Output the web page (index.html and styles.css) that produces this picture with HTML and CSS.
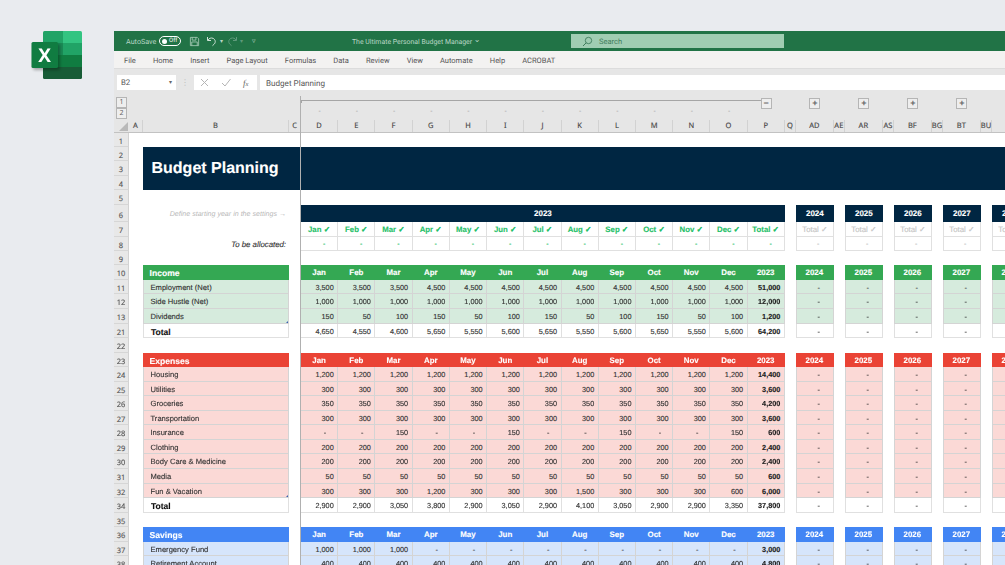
FILE: index.html
```html
<!DOCTYPE html>
<html lang="en">
<head>
<meta charset="utf-8">
<title>Budget Planning</title>
<link rel="stylesheet" href="styles.css">
</head>
<body>
<div class="logo">
<svg width="52" height="48" viewBox="0 0 52 48">
<defs><filter id="sh" x="-30%" y="-30%" width="160%" height="160%"><feGaussianBlur stdDeviation="1.6"/></filter></defs>
<path d="M12 1.500A1.500 1.500 0 0 1 13.500 0H32V12H12z" fill="#21a366"/>
<path d="M32 0h17.500A1.500 1.500 0 0 1 51 1.500V12H32z" fill="#33c481"/>
<rect x="12" y="12" width="20" height="12" fill="#1a8a55"/>
<rect x="32" y="12" width="19" height="12" fill="#21a366"/>
<rect x="12" y="24" width="20" height="12" fill="#107c41"/>
<rect x="32" y="24" width="19" height="12" fill="#107c41"/>
<path d="M12 36h39v10.500a1.500 1.500 0 0 1-1.500 1.500h-36a1.500 1.500 0 0 1-1.500-1.500z" fill="#185c37"/>
<rect x="2" y="13" width="27" height="26" rx="2" fill="#000" opacity=".3" filter="url(#sh)"/>
<rect x="0.500" y="11" width="26.500" height="26" rx="1.500" fill="#107c41"/>
<text class="logo-x" x="13.500" y="31">X</text>
</svg>
</div>
<div class="window">
  <div class="titlebar">
    <div class="tb-left">
      <span class="autosave">AutoSave</span>
      <span class="toggle"><span class="knob"></span>Off</span>
      <svg class="ic" width="11" height="11" viewBox="0 0 12 12"><path d="M1.500 1.500h7.500l1.500 1.500v7.500h-9z M3.500 1.500v3h4v-3 M3 10.500v-4h6v4" fill="none" stroke="#a9cdb8" stroke-width=".9"/></svg>
      <svg class="ic undo" width="12" height="12" viewBox="0 0 12 12"><path d="M1.500 2v3.500H5 M1.800 5.200C3 3.300 5 2.500 7 3.300c2.300 1 3 3.800 1.300 5.700L6.500 10.700" fill="none" stroke="#cfe3d7" stroke-width="1"/></svg>
      <span class="caret">▾</span>
      <svg class="ic redo" width="12" height="12" viewBox="0 0 12 12"><path d="M10.500 2v3.500H7 M10.200 5.200C9 3.300 7 2.500 5 3.300c-2.300 1-3 3.800-1.300 5.700l1.800 1.700" fill="none" stroke="#5f9a7b" stroke-width="1"/></svg>
      <span class="caret dim">▾</span>
      <span class="custom">▿</span>
    </div>
    <div class="doc">The Ultimate Personal Budget Manager <span class="chev">⌄</span></div>
    <div class="search">
      <svg width="11" height="11" viewBox="0 0 11 11"><circle cx="6.500" cy="4.500" r="3.200" fill="none" stroke="#3f7d5c" stroke-width=".9"/><path d="M4.200 6.800L1 10" stroke="#3f7d5c" stroke-width="1"/></svg>
      <span>Search</span>
    </div>
  </div>
  <div class="menu">
    <span>File</span><span>Home</span><span>Insert</span><span>Page Layout</span><span>Formulas</span><span>Data</span><span>Review</span><span>View</span><span>Automate</span><span>Help</span><span>ACROBAT</span>
  </div>
  <div class="fbar">
    <div class="namebox">B2<span class="nb-caret">▾</span></div>
    <span class="grip">⋮</span>
    <div class="fbtns">
      <svg width="9" height="9" viewBox="0 0 9 9"><path d="M1 1l7 7M8 1L1 8" stroke="#b5b5b5" stroke-width="1"/></svg>
      <svg width="10" height="9" viewBox="0 0 10 9"><path d="M1 5l3 3 5.500-7" fill="none" stroke="#b5b5b5" stroke-width="1"/></svg>
      <span class="fx">f<small>x</small></span>
    </div>
    <div class="finput">Budget Planning</div>
  </div>
  <div class="sheet">
    <div class="freeze"></div>
    <div class="row outline">
      <div class="lvl"><span>1</span><span>2</span></div><i></i><i></i><i></i>
      <div class="oline"></div>
      <em>-</em><em>-</em><em>-</em><em>-</em><em>-</em><em>-</em><em>-</em><em>-</em><em>-</em><em>-</em><em>-</em><em>-</em>
      <strong>−</strong><i></i><strong>+</strong><i></i><strong>+</strong><i></i><strong>+</strong><i></i><strong>+</strong><i></i><strong>+</strong>
    </div>
    <div class="row cols">
      <b class="corner"><svg width="9" height="9" viewBox="0 0 9 9"><path d="M9 0v9H0z" fill="#b9b9b9"/></svg></b>
      <u>A</u><u>B</u><u>C</u><u>D</u><u>E</u><u>F</u><u>G</u><u>H</u><u>I</u><u>J</u><u>K</u><u>L</u><u>M</u><u>N</u><u>O</u><u>P</u><u>Q</u><u>AD</u><u>AE</u><u>AR</u><u>AS</u><u>BF</u><u>BG</u><u>BT</u><u>BU</u>
    </div>
    <div class="row r1"><b>1</b></div>
    <div class="row banner">
      <div class="rhs"><b>2</b><b>3</b><b>4</b></div><i></i>
      <div class="bn">Budget Planning</div>
    </div>
    <div class="row r5"><b>5</b></div>
    <div class="row r6 yr">
      <b>6</b><i></i><div class="note">Define starting year in the settings →</div><i></i>
      <span class="y23">2023</span>
      <i></i><span>2024</span><i></i><span>2025</span><i></i><span>2026</span><i></i><span>2027</span><i></i><span>2028</span>
    </div>
    <div class="row chk">
      <b>7</b><i></i><i></i><i></i>
      <span>Jan ✓</span><span>Feb ✓</span><span>Mar ✓</span><span>Apr ✓</span><span>May ✓</span><span>Jun ✓</span><span>Jul ✓</span><span>Aug ✓</span><span>Sep ✓</span><span>Oct ✓</span><span>Nov ✓</span><span>Dec ✓</span><span>Total ✓</span>
      <i></i><span class="off">Total ✓</span><i></i><span class="off">Total ✓</span><i></i><span class="off">Total ✓</span><i></i><span class="off">Total ✓</span><i></i><span class="off">Total ✓</span>
    </div>
    <div class="row alloc">
      <b>8</b><i></i><div class="tba">To be allocated:</div><i></i>
      <span>-</span><span>-</span><span>-</span><span>-</span><span>-</span><span>-</span><span>-</span><span>-</span><span>-</span><span>-</span><span>-</span><span>-</span><span>-</span>
      <i></i><span class="off">-</span><i></i><span class="off">-</span><i></i><span class="off">-</span><i></i><span class="off">-</span><i></i><span class="off">-</span>
    </div>
    <div class="row r9"><b>9</b></div>

    <div class="row hd inc">
      <b>10</b><i></i><span class="l">Income</span><i></i>
      <span>Jan</span><span>Feb</span><span>Mar</span><span>Apr</span><span>May</span><span>Jun</span><span>Jul</span><span>Aug</span><span>Sep</span><span>Oct</span><span>Nov</span><span>Dec</span><span>2023</span>
      <i></i><span>2024</span><i></i><span>2025</span><i></i><span>2026</span><i></i><span>2027</span><i></i><span>2028</span>
    </div>
    <div class="row inc">
      <b>11</b><i></i><span class="l">Employment (Net)</span><i></i>
      <span>3,500</span><span>3,500</span><span>3,500</span><span>4,500</span><span>4,500</span><span>4,500</span><span>4,500</span><span>4,500</span><span>4,500</span><span>4,500</span><span>4,500</span><span>4,500</span><span class="t">51,000</span>
      <i></i><span class="y">-</span><i></i><span class="y">-</span><i></i><span class="y">-</span><i></i><span class="y">-</span><i></i><span class="y">-</span>
    </div>
    <div class="row inc">
      <b>12</b><i></i><span class="l">Side Hustle (Net)</span><i></i>
      <span>1,000</span><span>1,000</span><span>1,000</span><span>1,000</span><span>1,000</span><span>1,000</span><span>1,000</span><span>1,000</span><span>1,000</span><span>1,000</span><span>1,000</span><span>1,000</span><span class="t">12,000</span>
      <i></i><span class="y">-</span><i></i><span class="y">-</span><i></i><span class="y">-</span><i></i><span class="y">-</span><i></i><span class="y">-</span>
    </div>
    <div class="row inc">
      <b>13</b><i></i><span class="l mark">Dividends</span><i></i>
      <span>150</span><span>50</span><span>100</span><span>150</span><span>50</span><span>100</span><span>150</span><span>50</span><span>100</span><span>150</span><span>50</span><span>100</span><span class="t">1,200</span>
      <i></i><span class="y">-</span><i></i><span class="y">-</span><i></i><span class="y">-</span><i></i><span class="y">-</span><i></i><span class="y">-</span>
    </div>
    <div class="row tot">
      <b>21</b><i></i><span class="l">Total</span><i></i>
      <span>4,650</span><span>4,550</span><span>4,600</span><span>5,650</span><span>5,550</span><span>5,600</span><span>5,650</span><span>5,550</span><span>5,600</span><span>5,650</span><span>5,550</span><span>5,600</span><span class="t">64,200</span>
      <i></i><span class="y">-</span><i></i><span class="y">-</span><i></i><span class="y">-</span><i></i><span class="y">-</span><i></i><span class="y">-</span>
    </div>
    <div class="row"><b>22</b></div>

    <div class="row hd exp">
      <b>23</b><i></i><span class="l">Expenses</span><i></i>
      <span>Jan</span><span>Feb</span><span>Mar</span><span>Apr</span><span>May</span><span>Jun</span><span>Jul</span><span>Aug</span><span>Sep</span><span>Oct</span><span>Nov</span><span>Dec</span><span>2023</span>
      <i></i><span>2024</span><i></i><span>2025</span><i></i><span>2026</span><i></i><span>2027</span><i></i><span>2028</span>
    </div>
    <div class="row exp">
      <b>24</b><i></i><span class="l">Housing</span><i></i>
      <span>1,200</span><span>1,200</span><span>1,200</span><span>1,200</span><span>1,200</span><span>1,200</span><span>1,200</span><span>1,200</span><span>1,200</span><span>1,200</span><span>1,200</span><span>1,200</span><span class="t">14,400</span>
      <i></i><span class="y">-</span><i></i><span class="y">-</span><i></i><span class="y">-</span><i></i><span class="y">-</span><i></i><span class="y">-</span>
    </div>
    <div class="row exp">
      <b>25</b><i></i><span class="l">Utilities</span><i></i>
      <span>300</span><span>300</span><span>300</span><span>300</span><span>300</span><span>300</span><span>300</span><span>300</span><span>300</span><span>300</span><span>300</span><span>300</span><span class="t">3,600</span>
      <i></i><span class="y">-</span><i></i><span class="y">-</span><i></i><span class="y">-</span><i></i><span class="y">-</span><i></i><span class="y">-</span>
    </div>
    <div class="row exp">
      <b>26</b><i></i><span class="l">Groceries</span><i></i>
      <span>350</span><span>350</span><span>350</span><span>350</span><span>350</span><span>350</span><span>350</span><span>350</span><span>350</span><span>350</span><span>350</span><span>350</span><span class="t">4,200</span>
      <i></i><span class="y">-</span><i></i><span class="y">-</span><i></i><span class="y">-</span><i></i><span class="y">-</span><i></i><span class="y">-</span>
    </div>
    <div class="row exp">
      <b>27</b><i></i><span class="l">Transportation</span><i></i>
      <span>300</span><span>300</span><span>300</span><span>300</span><span>300</span><span>300</span><span>300</span><span>300</span><span>300</span><span>300</span><span>300</span><span>300</span><span class="t">3,600</span>
      <i></i><span class="y">-</span><i></i><span class="y">-</span><i></i><span class="y">-</span><i></i><span class="y">-</span><i></i><span class="y">-</span>
    </div>
    <div class="row exp">
      <b>28</b><i></i><span class="l">Insurance</span><i></i>
      <span class="d">-</span><span class="d">-</span><span>150</span><span class="d">-</span><span class="d">-</span><span>150</span><span class="d">-</span><span class="d">-</span><span>150</span><span class="d">-</span><span class="d">-</span><span>150</span><span class="t">600</span>
      <i></i><span class="y">-</span><i></i><span class="y">-</span><i></i><span class="y">-</span><i></i><span class="y">-</span><i></i><span class="y">-</span>
    </div>
    <div class="row exp">
      <b>29</b><i></i><span class="l">Clothing</span><i></i>
      <span>200</span><span>200</span><span>200</span><span>200</span><span>200</span><span>200</span><span>200</span><span>200</span><span>200</span><span>200</span><span>200</span><span>200</span><span class="t">2,400</span>
      <i></i><span class="y">-</span><i></i><span class="y">-</span><i></i><span class="y">-</span><i></i><span class="y">-</span><i></i><span class="y">-</span>
    </div>
    <div class="row exp">
      <b>30</b><i></i><span class="l">Body Care &amp; Medicine</span><i></i>
      <span>200</span><span>200</span><span>200</span><span>200</span><span>200</span><span>200</span><span>200</span><span>200</span><span>200</span><span>200</span><span>200</span><span>200</span><span class="t">2,400</span>
      <i></i><span class="y">-</span><i></i><span class="y">-</span><i></i><span class="y">-</span><i></i><span class="y">-</span><i></i><span class="y">-</span>
    </div>
    <div class="row exp">
      <b>31</b><i></i><span class="l">Media</span><i></i>
      <span>50</span><span>50</span><span>50</span><span>50</span><span>50</span><span>50</span><span>50</span><span>50</span><span>50</span><span>50</span><span>50</span><span>50</span><span class="t">600</span>
      <i></i><span class="y">-</span><i></i><span class="y">-</span><i></i><span class="y">-</span><i></i><span class="y">-</span><i></i><span class="y">-</span>
    </div>
    <div class="row exp">
      <b>32</b><i></i><span class="l mark">Fun &amp; Vacation</span><i></i>
      <span>300</span><span>300</span><span>300</span><span>1,200</span><span>300</span><span>300</span><span>300</span><span>1,500</span><span>300</span><span>300</span><span>300</span><span>600</span><span class="t">6,000</span>
      <i></i><span class="y">-</span><i></i><span class="y">-</span><i></i><span class="y">-</span><i></i><span class="y">-</span><i></i><span class="y">-</span>
    </div>
    <div class="row tot">
      <b>34</b><i></i><span class="l">Total</span><i></i>
      <span>2,900</span><span>2,900</span><span>3,050</span><span>3,800</span><span>2,900</span><span>3,050</span><span>2,900</span><span>4,100</span><span>3,050</span><span>2,900</span><span>2,900</span><span>3,350</span><span class="t">37,800</span>
      <i></i><span class="y">-</span><i></i><span class="y">-</span><i></i><span class="y">-</span><i></i><span class="y">-</span><i></i><span class="y">-</span>
    </div>
    <div class="row"><b>35</b></div>

    <div class="row hd sav">
      <b>36</b><i></i><span class="l">Savings</span><i></i>
      <span>Jan</span><span>Feb</span><span>Mar</span><span>Apr</span><span>May</span><span>Jun</span><span>Jul</span><span>Aug</span><span>Sep</span><span>Oct</span><span>Nov</span><span>Dec</span><span>2023</span>
      <i></i><span>2024</span><i></i><span>2025</span><i></i><span>2026</span><i></i><span>2027</span><i></i><span>2028</span>
    </div>
    <div class="row sav">
      <b>37</b><i></i><span class="l">Emergency Fund</span><i></i>
      <span>1,000</span><span>1,000</span><span>1,000</span><span class="d">-</span><span class="d">-</span><span class="d">-</span><span class="d">-</span><span class="d">-</span><span class="d">-</span><span class="d">-</span><span class="d">-</span><span class="d">-</span><span class="t">3,000</span>
      <i></i><span class="y">-</span><i></i><span class="y">-</span><i></i><span class="y">-</span><i></i><span class="y">-</span><i></i><span class="y">-</span>
    </div>
    <div class="row sav">
      <b>38</b><i></i><span class="l">Retirement Account</span><i></i>
      <span>400</span><span>400</span><span>400</span><span>400</span><span>400</span><span>400</span><span>400</span><span>400</span><span>400</span><span>400</span><span>400</span><span>400</span><span class="t">4,800</span>
      <i></i><span class="y">-</span><i></i><span class="y">-</span><i></i><span class="y">-</span><i></i><span class="y">-</span><i></i><span class="y">-</span>
    </div>
  </div>
</div>
</body>
</html>
```
FILE: styles.css
```css
* { box-sizing: border-box; }
html, body { margin: 0; height: 565px; overflow: hidden; text-rendering: geometricPrecision; }
body {
  background: #e9ebef;
  display: flex;
  align-items: flex-start;
  padding: 31px 0 0 31px;
  font-family: "Liberation Sans", Arial, sans-serif;
}
.logo { flex: none; width: 83px; height: 48px; }
.logo svg { display: block; filter: blur(.4px); }
.logo-x { font: bold 19px "Open Sans", "Liberation Sans", sans-serif; fill: #fff; text-anchor: middle; }

.window {
  flex: none;
  width: 891px;
  height: 534px;
  overflow: hidden;
  position: relative;
  background: #fff;
  filter: blur(.45px);
}

/* title bar */
.titlebar {
  height: 20px;
  background: #217346;
  display: flex;
  align-items: center;
  color: #cfe3d7;
  font: 7.200px Roboto, "Noto Sans", sans-serif;
  white-space: nowrap;
}
.tb-left { width: 238px; display: flex; align-items: center; padding-left: 12px; flex: none; }
.autosave { width: 33px; color: #b9d6c5; }
.toggle {
  width: 22px; height: 10px; border: 1px solid #fff; border-radius: 6px;
  display: flex; align-items: center; gap: 2px; padding-left: 2px;
  color: #fff; font-size: 6px; line-height: 1; flex: none;
}
.knob { width: 5px; height: 5px; border-radius: 50%; background: #fff; flex: none; }
.ic { margin-left: 8px; flex: none; }
.undo { margin-left: 6px; }
.redo { margin-left: 3px; }
.caret { font-size: 6px; margin-left: 2px; color: #b9d6c5; }
.dim { color: #5f9a7b; }
.custom { margin-left: 9px; font-size: 7px; color: #b9d6c5; }
.doc { width: 219px; flex: none; color: #b9d6c5; font-size: 6.900px; }
.chev { font-size: 8px; position: relative; top: -2px; }
.search {
  width: 213px; height: 14px; flex: none;
  background: #a0cdb2;
  display: flex; align-items: center; gap: 6px; padding-left: 11px;
  color: #3f7d5c; font-size: 7.500px;
}

/* menu */
.menu {
  height: 18px;
  background: #f3f2f1;
  border-bottom: 1px solid #dcdcdc;
  display: flex; align-items: center;
  padding: 1px 0 0 10px;
  gap: 17.100px;
  color: #555;
  font: 7.500px Roboto, "Noto Sans", sans-serif;
  white-space: nowrap;
}

/* formula bar */
.fbar {
  height: 27px;
  background: #e6e6e6;
  display: flex; align-items: center;
  padding: 0 0 0 3px;
  font: 8px Roboto, "Noto Sans", sans-serif;
  color: #555;
}
.namebox {
  width: 59px; height: 15px; background: #fff;
  display: flex; align-items: center; justify-content: space-between;
  padding: 0 4px 0 4px; font-size: 7.800px;
}
.nb-caret { font-size: 6px; color: #666; }
.grip { width: 18px; text-align: center; color: #bbb; font-size: 8px; flex: none; }
.fbtns {
  width: 63px; height: 15px; background: #fff; flex: none;
  display: flex; align-items: center; gap: 12px; padding-left: 6px;
}
.fx { font: italic 9px "Liberation Serif", serif; color: #666; }
.fx small { font-size: 6.500px; }
.finput {
  flex: 1; height: 15px; margin-left: 3px; background: #fff;
  display: flex; align-items: center; padding-left: 6px;
  color: #555; font-size: 8.100px;
}

/* sheet */
.sheet { position: relative; }
.freeze { position: absolute; left: 186px; top: 0; width: 1px; height: 480px; background: #b0b0b0; z-index: 3; }
.row {
  display: grid;
  grid-template-columns: 15px 14px 146px 12px repeat(13, 37.230px) repeat(5, 11px 38px);
  grid-auto-rows: 14.550px;
  height: 14.550px;
  font-size: 7.300px;
  line-height: 16.500px;
  color: #333;
  white-space: nowrap;
  -webkit-text-stroke: .12px;
}
.row i { display: block; }
.row > b, .rhs > b {
  display: block;
  background: #e8e8e8;
  border-bottom: 1px solid #d6d6d6;
  border-right: 1px solid #d2d2d2;
  text-align: center;
  font: 7.500px/19.500px "Noto Sans", "Open Sans", sans-serif;
  color: #555;
  height: 100%;
  overflow: hidden;
}
.row.r1 > b, .row.r5 > b, .row.r9 > b, .rhs > b { line-height: 18px; }
.row.yr > b { line-height: 23px; }
.row.r1 { height: 13.600px; grid-auto-rows: 13.600px; }
.row.r5 { height: 14.300px; grid-auto-rows: 14.300px; }
.row.r9 { height: 14px; grid-auto-rows: 14px; }

/* outline + column headers */
.outline {
  height: 24px; grid-auto-rows: 24px;
  background: #e6e6e6;
  position: relative;
  -webkit-text-stroke: 0;
}
.lvl { display: flex; flex-direction: column; padding: 1px 0 0 2px; }
.lvl span {
  width: 11px; height: 11px; border: 1px solid #b5b5b5; background: #eee;
  font: 7px/9px "Noto Sans", sans-serif; color: #666; text-align: center;
}
.oline {
  position: absolute; left: 187px; top: 4px; width: 460px; height: 3px;
  border-top: 1px solid #a5a5a5; border-left: 1px solid #a5a5a5;
}
.outline em { font: 7px/32px "Noto Sans", sans-serif; color: #999; text-align: center; }
.outline strong {
  justify-self: center; align-self: start; margin-top: 1.500px;
  width: 11px; height: 11px; border: 1px solid #b5b5b5; background: #eee;
  font: bold 9px/9px "Liberation Sans", sans-serif; color: #666; text-align: center;
}
.cols {
  height: 13px; grid-auto-rows: 12px;
  background: #e6e6e6;
  border-bottom: 1px solid #c2c2c2;
}
.cols u {
  text-decoration: none; text-align: center;
  font: 7.500px/12px "Noto Sans", "Open Sans", sans-serif;
  color: #444;
  border-right: 1px solid #d2d2d2;
}
.row .corner { background: #e6e6e6; border: 0; padding: 2px 0 0 4px; line-height: 0; }

/* banner */
.banner { height: 43.650px; grid-auto-rows: 43.650px; }
.rhs { display: grid; grid-template-rows: repeat(3, 1fr); }
.rhs > b { height: auto; }
.bn {
  grid-column: 3 / -1;
  background: #002642;
  color: #fff;
  font: bold 16px/43px "Liberation Sans", sans-serif;
  padding-left: 8.500px;
}

/* top header rows */
.row.yr { height: 17.600px; grid-auto-rows: 17.600px; line-height: 17.600px; }
.yr span {
  background: #002642; color: #fff; font-weight: bold; font-size: 8px; text-align: center;
}
.yr .y23 { grid-column: span 13; }
.note { color: #b9b9b9; font-style: italic; text-align: right; padding-right: 3px; font-size: 7.100px; line-height: 18px; -webkit-text-stroke: 0; }
.tba { color: #333; font-style: italic; text-align: right; padding-right: 3px; font-size: 7.800px; }
.chk span, .alloc span {
  text-align: center;
  border: 1px solid #e0e0e0; border-width: 0 1px 1px 0;
  background: #fff;
}
.chk span { color: #1fbf68; font-weight: bold; font-size: 7.800px; }
.alloc span { color: #1fbf68; font-size: 7px; text-align: right; padding-right: 12px; }
.chk .off, .alloc .off { color: #c4c4c4; font-weight: normal; border-left: 1px solid #e0e0e0; }
.alloc .off { padding-right: 13.500px; }
.chk, .alloc { height: 14.600px; }
.chk span:nth-child(5), .alloc span:nth-child(5) { border-left: 0; }

/* data sections */
.inc span, .exp span, .sav span, .tot span {
  text-align: right;
  padding-right: 3.500px;
  border-right: 1px solid #d4d4d4;
  border-bottom: 1px solid #d4d4d4;
  overflow: hidden;
}
.inc span { background: #d6ebdd; }
.exp span { background: #fbd9d6; }
.sav span { background: #d6e5fb; }
.tot span { background: #fff; border-color: #e0e0e0; }
.row .l { text-align: left; padding: 0 0 0 6.500px; font-size: 7.600px; border-left: 1px solid #d4d4d4; position: relative; }
.row .t { font-weight: bold; color: #222; }
.row .d { padding-right: 11px; }
.row .y { padding-right: 13px; text-align: right; border-left: 1px solid #d4d4d4; }
.tot .l, .tot .y { border-left-color: #e0e0e0; }
.mark::after {
  content: ""; position: absolute; right: 0; bottom: 0;
  border: 1.500px solid transparent; border-right-color: #3a5fb0; border-bottom-color: #3a5fb0;
}
.row.tot .l { color: #111; font-weight: bold; font-size: 8.500px; padding-left: 7px; }
.hd span {
  color: #fff; font-weight: bold; font-size: 7.900px; text-align: center;
  padding: 0; border-color: transparent;
}
.hd.inc span { background: #34a853; }
.hd.exp span { background: #ea4335; }
.hd.sav span { background: #4285f4; }
.row.hd .l { font-size: 8.600px; padding-left: 6.500px; border-left: 0; }
```
